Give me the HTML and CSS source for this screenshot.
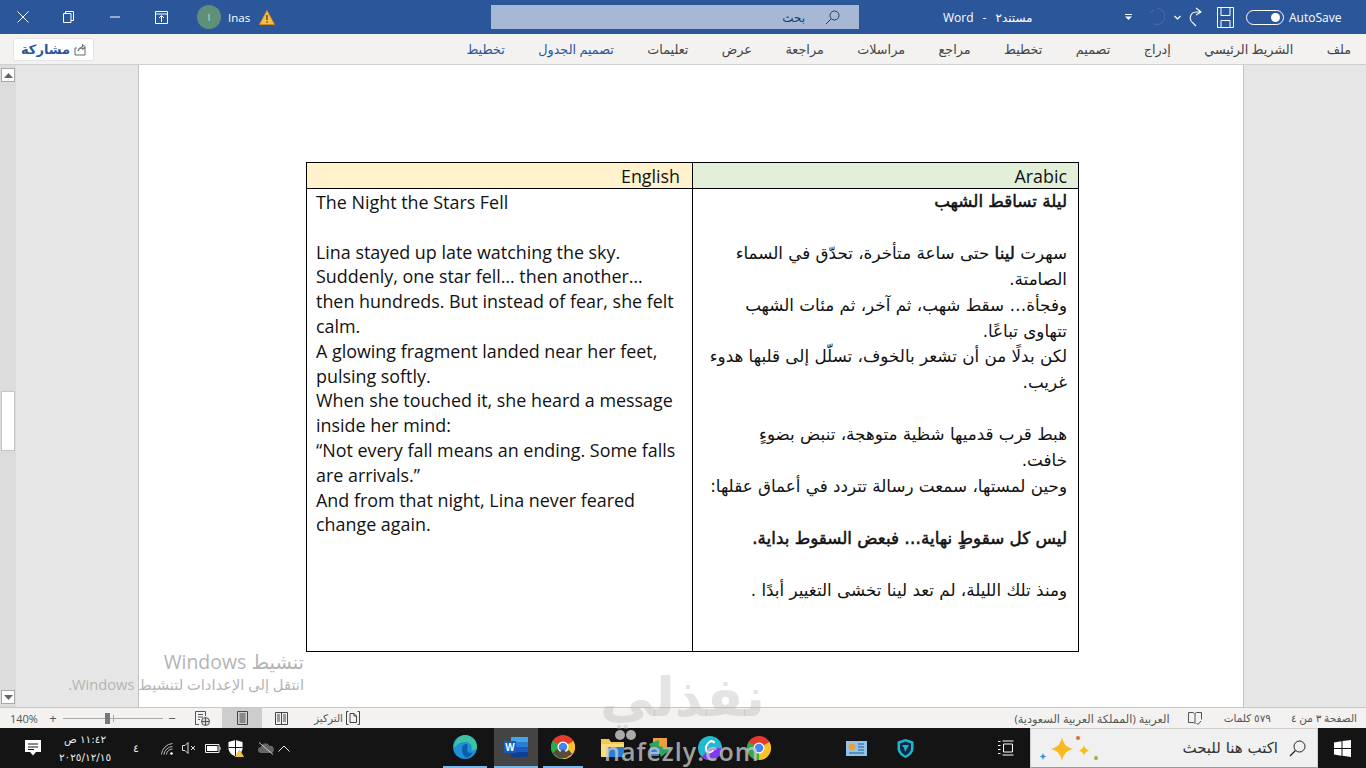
FILE: index.html
```html
<!DOCTYPE html>
<html lang="ar">
<head>
<meta charset="utf-8">
<title>Word</title>
<link rel="stylesheet" href="styles.css">
</head>
<body>
<div class="app">
  <header class="titlebar">
    <svg class="tb-close" width="14" height="14" viewBox="0 0 14 14"><path d="M1.5 1.5l11 11M12.5 1.5l-11 11" stroke="#fff" fill="none"/></svg>
    <svg class="tb-restore" width="11" height="12" viewBox="0 0 11 12"><path d="M.5 2.5h7.500v9h-7.500zM2.500 2.500v-2h8v9H8" stroke="#fff" fill="none"/></svg>
    <svg class="tb-min" width="10" height="2" viewBox="0 0 10 2"><path d="M0 1h10" stroke="#fff"/></svg>
    <svg class="tb-ribbon" width="13" height="13" viewBox="0 0 13 13"><path d="M.5.500h12v12H.5zM.5 3h12M6.500 11V5M4 7l2.500-2.500L9 7" stroke="#fff" fill="none"/></svg>
    <span class="avatar">I</span>
    <span class="user">Inas</span>
    <svg class="tb-warn" width="16" height="15" viewBox="0 0 16 15"><path d="M8 .5l7.500 14H.5z" fill="#f3c04e" stroke="#d08a1e"/><path d="M8 5v5M8 11.300v1.500" stroke="#5c3b0a" stroke-width="1.300"/></svg>
    <div class="searchbox">
      <span class="searchbox-text" dir="rtl">بحث</span>
      <svg class="searchbox-icon" width="15" height="15" viewBox="0 0 15 15"><circle cx="9.500" cy="5.500" r="4.500" stroke="#203c66" fill="none"/><path d="M6 9l-5 5" stroke="#203c66" fill="none"/></svg>
    </div>
    <div class="doc-title"><span>Word</span><span class="dash">-</span><span dir="rtl">مستند٢</span></div>
    <svg class="tb-qat" width="7" height="6" viewBox="0 0 7 6"><path d="M0 .5h7" stroke="#fff"/><path d="M0 2.500h7L3.500 6z" fill="#fff"/></svg>
    <svg class="tb-undo" width="17" height="21" viewBox="0 0 17 21"><path d="M6 2.500L2.500 6M9 1.500a8 8 0 1 1-4 15" stroke="#44699f" stroke-width="1.200" fill="none"/></svg>
    <svg class="tb-chev" width="7" height="5" viewBox="0 0 7 5"><path d="M.5 1l3 3 3-3" stroke="#fff" fill="none" stroke-width="1.200"/></svg>
    <svg class="tb-redo" width="15" height="21" viewBox="0 0 15 21"><path d="M7 1l5 4-5 3M12 5H7a6 6 0 0 0-3 11l3 3" stroke="#fff" fill="none" stroke-width="1.100"/></svg>
    <svg class="tb-save" width="17" height="21" viewBox="0 0 17 21"><path d="M.5.500h16v20H.5zM4 .500v8h9v-8M4 20.500v-7h9v7" stroke="#fff" fill="none"/></svg>
    <span class="toggle"><span class="toggle-dot"></span></span>
    <span class="autosave">AutoSave</span>
  </header>

  <nav class="ribbon">
    <button class="share" type="button">
      <span dir="rtl">مشاركة</span>
      <svg width="12" height="13" viewBox="0 0 12 13"><path d="M3 5H1v7h10V5H9M4 8c0-2.500 2-4 4.500-4V1.500L11.500 4 8.500 6.500V5C6.500 5 5 6 4 8z" stroke="#666" fill="none"/></svg>
    </button>
    <div class="tabs" dir="rtl">
      <span>ملف</span><span>الشريط الرئيسي</span><span>إدراج</span><span>تصميم</span><span>تخطيط</span><span>مراجع</span><span>مراسلات</span><span>مراجعة</span><span>عرض</span><span>تعليمات</span><span class="tab-ctx">تصميم الجدول</span><span class="tab-ctx">تخطيط</span>
    </div>
  </nav>

  <main class="workspace">
    <div class="scrollbar">
      <div class="sb-btn"><svg width="9" height="5" viewBox="0 0 9 5"><path d="M4.500 0L9 5H0z" fill="#666"/></svg></div>
      <div class="sb-thumb"></div>
      <div class="sb-btn"><svg width="9" height="5" viewBox="0 0 9 5"><path d="M0 0h9L4.500 5z" fill="#666"/></svg></div>
    </div>
    <div class="canvas">
      <div class="page">
        <div class="doc-table">
          <div class="head head-en">English</div>
          <div class="head head-ar">Arabic</div>
          <div class="cell-en">The Night the Stars Fell<br><br>Lina stayed up late watching the sky.<br>Suddenly, one star fell… then another…<br>then hundreds. But instead of fear, she felt<br>calm.<br>A glowing fragment landed near her feet,<br>pulsing softly.<br>When she touched it, she heard a message<br>inside her mind:<br>“Not every fall means an ending. Some falls<br>are arrivals.”<br>And from that night, Lina never feared<br>change again.</div>
          <div class="cell-ar" dir="rtl"><b>ليلة تساقط الشهب</b><br><br>سهرت <b>لينا</b> حتى ساعة متأخرة، تحدّق في السماء<br>الصامتة.<br>وفجأة… سقط شهب، ثم آخر، ثم مئات الشهب<br>تتهاوى تباعًا.<br>لكن بدلًا من أن تشعر بالخوف، تسلّل إلى قلبها هدوء<br>غريب.<br><br>هبط قرب قدميها شظية متوهجة، تنبض بضوءٍ<br>خافت.<br>وحين لمستها، سمعت رسالة تتردد في أعماق عقلها:<br><br><b>ليس كل سقوطٍ نهاية… فبعض السقوط بداية.</b><br><br>ومنذ تلك الليلة، لم تعد لينا تخشى التغيير أبدًا .</div>
        </div>
      </div>
    </div>
    <div class="activate">
      <div class="activate-title" dir="rtl">تنشيط Windows</div>
      <div class="activate-sub" dir="rtl">انتقل إلى الإعدادات لتنشيط Windows.</div>
    </div>
  </main>

  <footer class="statusbar">
    <span class="zoom-pct">140%</span>
    <span class="zoom-btn zoom-plus">+</span>
    <span class="slider"><span class="slider-mid"></span><span class="slider-thumb"></span></span>
    <span class="zoom-btn zoom-minus">−</span>
    <svg class="st-web" width="15" height="15" viewBox="0 0 15 15"><path d="M4 13.500H.5V.5h10V5M3 3.500h5M3 6h5M3 8.500h2" stroke="#555" fill="none"/><circle cx="10.500" cy="10.500" r="4" stroke="#555" fill="#ddd"/><path d="M6.500 10.500h8M10.500 6.500v8" stroke="#555"/></svg>
    <span class="view-active"><svg width="11" height="14" viewBox="0 0 11 14"><path d="M.5.500h10v13H.5zM2.500 3h6M2.500 5h6M2.500 7h6M2.500 9h6M2.500 11h6" stroke="#444" fill="none"/></svg></span>
    <svg class="st-read" width="13" height="13" viewBox="0 0 13 13"><path d="M.5.500h12v12H.5zM6.500.500v12M2 3h3M2 5h3M2 7h3M2 9h3M8 3h3M8 5h3M8 7h3M8 9h3" stroke="#444" fill="none"/></svg>
    <span class="st-focus" dir="rtl">التركيز</span>
    <svg class="st-focus-ic" width="14" height="14" viewBox="0 0 14 14"><path d="M2.500.5H.5v13h2M11.500.5h2v13h-2M4 11.500v-9h4l2.500 2.500v6.500zM8 2.500V5h2.500" stroke="#444" fill="none"/></svg>
    <span class="st-lang" dir="rtl">العربية (المملكة العربية السعودية)</span>
    <svg class="st-book" width="14" height="13" viewBox="0 0 14 13"><path d="M6.500 1.500L5 .5H.5v10H6M7 12V1.500L8.500.5h5v7M8.500 11l1.500 1.500 3-3.500" stroke="#555" fill="none"/></svg>
    <span class="st-words" dir="rtl">٥٧٩ كلمات</span>
    <span class="st-page" dir="rtl">الصفحة ٣ من ٤</span>
  </footer>

  <footer class="taskbar">
    <svg class="tk-action" width="16" height="16" viewBox="0 0 16 16"><path d="M0 0h16v12h-5l-3 3.500L5 12H0z" fill="#fff"/><path d="M3 4h10M3 7h10M3 9.500h6" stroke="#141414"/></svg>
    <div class="clock" dir="rtl"><span>١١:٤٢ ص</span><span>٢٠٢٥/١٢/١٥</span></div>
    <span class="tk-lang">٤</span>
    <svg class="tk-wifi" width="12" height="13" viewBox="0 0 12 13"><path d="M.5 12.500a12 12 0 0 1 11-11M3 12.500a9 9 0 0 1 8.500-8M5.500 12.500a6 6 0 0 1 6-5.500" stroke="#bbb" fill="none"/><circle cx="10.500" cy="11.500" r="1.300" fill="#fff"/></svg>
    <svg class="tk-vol" width="14" height="12" viewBox="0 0 14 12"><path d="M.5 3.500h2.500L6 .5v11L3 8.500H.5z" stroke="#ddd" fill="none"/><path d="M9 4l4 4M13 4l-4 4" stroke="#ddd"/></svg>
    <svg class="tk-batt" width="16" height="9" viewBox="0 0 16 9"><path d="M.5.500h13.500v8H.5z" stroke="#eee" fill="none"/><path d="M2 2h10.500v5H2z" fill="#fff"/><path d="M14.500 3h1v3h-1z" fill="#eee"/></svg>
    <svg class="tk-shield" width="16" height="17" viewBox="0 0 16 17"><path d="M7.500 0l7 2v6c0 4-3 7-7 8.500C3.500 15 .5 12 .5 8V2z" fill="#fff"/><path d="M7.500 0v16M.5 7.500h14" stroke="#141414"/><path d="M11.500 9l4.500 8H7z" fill="#f3c04e"/></svg>
    <svg class="tk-cloud" width="16" height="13" viewBox="0 0 16 13"><path d="M3 11a3 3 0 0 1 0-6 4.500 4.500 0 0 1 8.500-1A3.500 3.500 0 0 1 13 11z" fill="#666"/><path d="M1 .5l14 12" stroke="#ccc"/></svg>
    <svg class="tk-caret" width="12" height="7" viewBox="0 0 12 7"><path d="M.5 6.500L6 1l5.500 5.500" stroke="#eee" fill="none"/></svg>

    <span class="tk-app tk-edge"><svg width="24" height="24" viewBox="0 0 24 24"><circle cx="12" cy="12" r="12" fill="#1d8fdb"/><path d="M12 0a12 12 0 0 1 12 12c0 3-3 4-6 3 2-3 0-8-6-8-4 0-8 2-11 6A12 12 0 0 1 12 0z" fill="#3ec1a0"/><path d="M9 14c0-3 2-5 5-5 1.500 3-1 6 1 8 2 1.500 4 1 5 .5a12 12 0 0 1-6 5c-3-.5-5-4-5-8.500z" fill="#0c5ea6"/></svg></span>
    <span class="tk-app tk-word"><svg width="24" height="20" viewBox="0 0 24 20"><path d="M7 0h17v5H7z" fill="#41a5ee"/><path d="M7 5h17v5H7z" fill="#2b7cd3"/><path d="M7 10h17v5H7z" fill="#185abd"/><path d="M7 15h17v5H7z" fill="#103f91"/><path d="M0 4h12v12H0z" fill="#185abd"/><text x="6" y="13.500" class="word-w">W</text></svg></span>
    <span class="tk-app tk-chrome1"><svg width="24" height="24" viewBox="0 0 24 24"><circle cx="12" cy="12" r="12" fill="#e33b2e"/><path d="M12 12L22.400 6A12 12 0 0 1 12 24z" fill="#f7c325"/><path d="M12 12L12 24A12 12 0 0 1 1.600 6z" fill="#2da94f"/><circle cx="12" cy="12" r="5.500" fill="#fff"/><circle cx="12" cy="12" r="4.300" fill="#4285f4"/><path d="M2 18l4-4 3 3 3-3 3 3 3-2 3 4-6 4H8z" fill="#5a4a3c"/></svg></span>
    <span class="tk-app tk-folder"><svg width="23" height="20" viewBox="0 0 23 20"><path d="M0 1h8l2 3h13v15H0z" fill="#f3c94b"/><path d="M0 6h23v13H0z" fill="#f9dc7c"/><path d="M7 9h16v10H7z" fill="#2b7cd3"/></svg></span>
    <span class="tk-app tk-sync"><svg width="22" height="20" viewBox="0 0 22 20"><path d="M4 0h14v9H4z" fill="#f29d38"/><path d="M0 6l10-4v6l12 3-10 8-2-6H4z" fill="#2fa55a"/><path d="M1 9h9v9H1z" fill="#3b7fd9"/></svg></span>
    <span class="tk-app tk-canva"><svg width="24" height="24" viewBox="0 0 24 24"><circle cx="12" cy="12" r="12" fill="#22b8cf"/><path d="M12 12h12a12 12 0 0 1-20 9z" fill="#7d3cf0"/><path d="M16.500 7c-1-2-3-2.500-5-1-3 2-4.500 6-3 9 1.500 2.500 5 1.500 7-1" stroke="#fff" stroke-width="2" fill="none"/></svg></span>
    <span class="tk-app tk-chrome2"><svg width="24" height="24" viewBox="0 0 24 24"><circle cx="12" cy="12" r="12" fill="#e33b2e"/><path d="M12 12L22.400 6A12 12 0 0 1 12 24z" fill="#f7c325"/><path d="M12 12L12 24A12 12 0 0 1 1.600 6z" fill="#2da94f"/><circle cx="12" cy="12" r="5.500" fill="#fff"/><circle cx="12" cy="12" r="4.300" fill="#4285f4"/></svg></span>
    <span class="tk-app tk-widget"><svg width="21" height="15" viewBox="0 0 21 15"><path d="M0 0h21v15H0z" fill="#8fc5ea"/><circle cx="6" cy="6" r="3.500" fill="#f29d38"/><path d="M12 3h6M12 6h6M12 9h6M3 12h15" stroke="#1f5f95"/></svg></span>
    <span class="tk-app tk-vpn"><svg width="17" height="19" viewBox="0 0 17 19"><path d="M8.500 0l8 2.500v7c0 4-3.500 7.500-8 9.500-4.500-2-8-5.500-8-9.500v-7z" fill="#1bb8c9"/><path d="M8.500 2.500l5.500 2v5c0 3-2.500 5.500-5.500 7-3-1.500-5.500-4-5.500-7v-5z" fill="#0d2a4a"/><path d="M5 6h7l-4 7-1-4z" fill="#1bb8c9"/></svg></span>
    <svg class="tk-view" width="16" height="16" viewBox="0 0 16 16"><path d="M4.500 1h11M4.500 15h11M5.500 4h9v8h-9zM0 1.500h2.500M0 5.500h2.500M0 9.500h2.500M0 13.500h2.500" stroke="#fff" fill="none"/></svg>
    <div class="tk-search">
      <svg class="spark" width="62" height="28" viewBox="0 0 62 28"><path d="M24 3c1.500 7 4 10 11 12-7 2-9.500 5-11 12-1.500-7-4-10-11-12 7-2 9.500-5 11-12z" fill="#f9b91c"/><path d="M46 11c.7 3 1.700 4 5 5.500-3.300 1.500-4.300 2.500-5 5.500-.7-3-1.700-4-5-5.500 3.300-1.500 4.300-2.500 5-5.500z" fill="#f9b91c"/><path d="M5 19c.5 2 1 3 3.500 3.500C6 23 5.500 24 5 26c-.5-2-1-3-3.500-3.500C4 22 4.500 21 5 19z" fill="#2a9be8"/><circle cx="40" cy="4" r="2" fill="#e8683c"/><circle cx="58" cy="24" r="2" fill="#8cb83c"/></svg>
      <span class="tk-search-text" dir="rtl">اكتب هنا للبحث</span>
      <svg class="tk-search-ic" width="17" height="17" viewBox="0 0 17 17"><circle cx="10.500" cy="6.500" r="5.500" stroke="#222" fill="none"/><path d="M6.500 10.500L1 16" stroke="#222" stroke-width="1.300"/></svg>
    </div>
    <span class="tk-start"><svg width="17" height="17" viewBox="0 0 17 17"><path d="M0 2.500L7.500 1.300v6.600H0zM8.500 1.100L17 0v7.900H8.500zM0 9h7.500v6.700L0 14.500zM8.500 9H17v8l-8.500-1.200z" fill="#fff"/></svg></span>
  </footer>

  <div class="wm-ar" dir="rtl">نفذلي</div>
  <div class="wm-dots"><span></span><span></span></div>
  <div class="wm-en">nafezly.com</div>
</div>
</body>
</html>
```

FILE: styles.css
```css
* { box-sizing: border-box; }
html, body { margin: 0; padding: 0; height: 100%; overflow: hidden; }
body { font-family: "Open Sans", "DejaVu Sans", sans-serif; }
svg { display: block; flex: none; }
.app { position: relative; width: 1366px; height: 768px; display: flex; flex-direction: column; overflow: hidden; }

/* title bar */
.titlebar { height: 34px; flex: none; background: #2b579a; color: #fff; display: flex; align-items: center; font-size: 12px; }
.tb-close { margin-left: 16px; }
.tb-restore { margin-left: 33px; }
.tb-min { margin-left: 36px; }
.tb-ribbon { margin-left: 35px; }
.avatar { margin-left: 29px; width: 24px; height: 24px; border-radius: 50%; background: #5f8f78; color: #d8e6dd; font-size: 9px; display: flex; align-items: center; justify-content: center; flex: none; }
.user { margin-left: 7px; width: 32px; font-size: 11.500px; flex: none; }
.tb-warn { margin-left: -1px; }
.searchbox { margin-left: 216px; width: 368px; height: 24px; background: #a7b8d4; display: flex; align-items: center; justify-content: flex-end; color: #203c66; font-size: 12px; flex: none; }
.searchbox-icon { margin: 0 19px 0 20px; }
.doc-title { margin-left: 84px; width: 100px; display: flex; gap: 9px; flex: none; font-size: 12px; }
.tb-qat { margin-left: 82px; }
.tb-undo { margin-left: 16px; }
.tb-chev { margin-left: 9px; }
.tb-redo { margin-left: 8px; }
.tb-save { margin-left: 13px; }
.toggle { margin-left: 12px; width: 38px; height: 15px; border: 1px solid #fff; border-radius: 8px; display: flex; align-items: center; justify-content: flex-end; padding-right: 3px; flex: none; }
.toggle-dot { width: 9px; height: 9px; border-radius: 50%; background: #fff; }
.autosave { margin-left: 5px; font-size: 12px; }

/* ribbon */
.ribbon { height: 31px; flex: none; background: #f3f2f1; border-bottom: 1px solid #d2d0ce; display: flex; align-items: center; justify-content: space-between; padding: 0 15px 0 13px; }
.share { width: 81px; height: 23px; background: #fff; border: 1px solid #e4e4e4; border-radius: 2px; padding: 0; display: flex; align-items: center; justify-content: center; gap: 4px; color: #2b579a; font: bold 13px "DejaVu Sans", sans-serif; }
.tabs { display: flex; gap: 33.400px; font-size: 12.800px; color: #444; }
.tab-ctx { color: #2b579a; }

/* workspace */
.workspace { position: relative; flex: 1; min-height: 0; background: #e6e6e6; display: flex; }
.scrollbar { width: 16px; flex: none; background: #dcdcdc; padding: 3px 1px; display: flex; flex-direction: column; justify-content: space-between; align-items: stretch; }
.sb-btn { height: 14px; background: #fff; border: 1px solid #a8a8a8; display: flex; align-items: center; justify-content: center; }
.sb-thumb { height: 60px; background: #fff; border: 1px solid #c4c4c4; margin-top: 296px; margin-bottom: 226px; }
.canvas { flex: 1; padding-left: 122px; padding-right: 122px; }
.page { height: 100%; background: #fff; border-left: 1px solid #c4c4c4; border-right: 1px solid #c4c4c4; padding: 97px 0 0 167px; }
.doc-table { width: 773px; height: 490px; display: grid; grid-template-columns: 386px 385px; grid-template-rows: 26px 1fr; border: 1px solid #000; color: #111; }
.head { font-size: 17.850px; line-height: 26px; text-align: right; border-bottom: 1px solid #000; padding-right: 11px; }
.head-en { background: #fff2cc; border-right: 1px solid #000; padding-right: 12px; }
.head-ar { background: #e2efd9; }
.cell-en { font-size: 17.900px; line-height: 24.800px; padding: 1px 0 0 9px; border-right: 1px solid #000; white-space: nowrap; }
.cell-ar { font-family: "DejaVu Sans", sans-serif; font-size: 16.750px; line-height: 25.900px; padding: 0 11px 0 0; white-space: nowrap; }
.cell-ar b { font-weight: normal; -webkit-text-stroke: .5px #111; }
.activate { position: absolute; right: 1062px; top: 585px; color: #b4b4b4; text-align: right; white-space: nowrap; }
.activate-title { font-size: 19.400px; line-height: 24px; }
.activate-sub { font-size: 14.700px; line-height: 18px; margin-top: 1px; }

/* status bar */
.statusbar { height: 21px; flex: none; background: #f3f2f1; border-top: 1px solid #c8c6c4; display: flex; align-items: center; color: #555; font-size: 10.500px; }
.zoom-pct { margin-left: 10px; width: 38px; font-size: 11px; }
.zoom-btn { width: 10px; text-align: center; font-size: 13px; line-height: 13px; }
.slider { position: relative; margin-left: 5px; width: 100px; height: 1px; background: #a8a8a8; }
.slider-mid { position: absolute; left: 50px; top: -3px; width: 1px; height: 7px; background: #a8a8a8; }
.slider-thumb { position: absolute; left: 42px; top: -5px; width: 5px; height: 11px; background: #777; }
.zoom-minus { margin-left: 4px; }
.st-web { margin-left: 18px; }
.view-active { margin-left: 12px; width: 40px; height: 20px; background: #cdcdcd; display: flex; align-items: center; justify-content: center; flex: none; }
.st-read { margin-left: 13px; }
.st-focus { margin-left: 25px; width: 30px; white-space: nowrap; }
.st-focus-ic { margin-left: 3px; }
.st-lang { margin-left: 654px; width: 156px; white-space: nowrap; text-align: center; font-size: 11.300px; }
.st-book { margin-left: 18px; }
.st-words { margin-left: 22px; width: 47px; white-space: nowrap; }
.st-page { margin-left: 20px; width: 66px; white-space: nowrap; }

/* taskbar */
.taskbar { height: 40px; flex: none; background: #141414; color: #eee; display: flex; align-items: center; font-family: "DejaVu Sans", sans-serif; }
.tk-action { margin-left: 25px; }
.clock { margin-left: 18px; width: 52px; display: flex; flex-direction: column; align-items: center; font-size: 10.500px; line-height: 18px; white-space: nowrap; }
.tk-lang { margin-left: 22px; width: 10px; font-size: 11px; }
.tk-wifi { margin-left: 21px; }
.tk-vol { margin-left: 9px; }
.tk-batt { margin-left: 9px; }
.tk-shield { margin-left: 7px; }
.tk-cloud { margin-left: 14px; }
.tk-caret { margin-left: 4px; }
.tk-app { height: 40px; display: flex; align-items: center; justify-content: center; flex: none; }
.tk-edge { margin-left: 153px; width: 44px; border-bottom: 2px solid #76b9ed; }
.tk-word { margin-left: 7px; width: 44px; background: #444; border-bottom: 2px solid #76b9ed; }
.tk-chrome1 { margin-left: 5px; width: 40px; border-bottom: 2px solid #76b9ed; }
.tk-folder { margin-left: 9px; width: 40px; }
.tk-sync { margin-left: 8px; width: 40px; }
.tk-canva { margin-left: 10px; width: 40px; }
.tk-chrome2 { margin-left: 9px; width: 40px; }
.tk-widget { margin-left: 57px; width: 40px; }
.tk-vpn { margin-left: 9px; width: 40px; }
.word-w { font: bold 10px "Liberation Sans", sans-serif; fill: #fff; text-anchor: middle; }
.tk-view { margin-left: 73px; }
.tk-search { margin-left: 16px; width: 288px; height: 40px; background: #f0f0f0; border: 1px solid #cfcfcf; border-bottom-color: #999; display: flex; align-items: center; flex: none; }
.spark { margin-left: 7px; }
.tk-search-text { margin-left: 82px; width: 96px; color: #333; font-size: 15px; white-space: nowrap; flex: none; }
.tk-search-ic { margin-left: 11px; }
.tk-start { width: 48px; display: flex; justify-content: center; flex: none; }

/* watermark */
.wm-ar { position: absolute; left: 595px; top: 668px; width: 175px; text-align: center; font: bold 54px/60px "DejaVu Sans", sans-serif; color: rgba(170,170,170,.32); white-space: nowrap; }
.wm-dots { position: absolute; left: 615px; top: 730px; display: flex; gap: 1px; }
.wm-dots span { width: 10px; height: 10px; border-radius: 50%; background: #aaa; }
.wm-en { position: absolute; left: 604px; top: 736px; font: 600 25px/30px "Open Sans", sans-serif; letter-spacing: 1px; color: rgba(200,200,200,.8); white-space: nowrap; }
```
